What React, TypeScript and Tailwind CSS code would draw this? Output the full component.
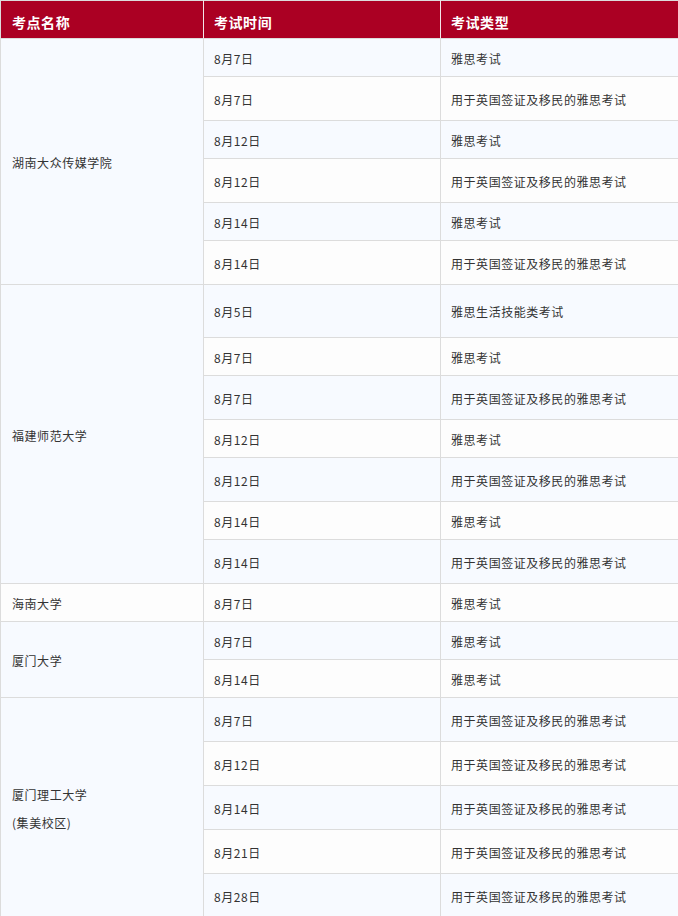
import React from "react";

type Row = { date: string; type: string; h: number; site?: { name: React.ReactNode; span: number } };

const L = "用于英国签证及移民的雅思考试";
const S = "雅思考试";

const rows: Row[] = [
  { date: "8月7日", type: S, h: 38, site: { name: "湖南大众传媒学院", span: 6 } },
  { date: "8月7日", type: L, h: 44 },
  { date: "8月12日", type: S, h: 38 },
  { date: "8月12日", type: L, h: 44 },
  { date: "8月14日", type: S, h: 38 },
  { date: "8月14日", type: L, h: 44 },
  { date: "8月5日", type: "雅思生活技能类考试", h: 53, site: { name: "福建师范大学", span: 7 } },
  { date: "8月7日", type: S, h: 38 },
  { date: "8月7日", type: L, h: 44 },
  { date: "8月12日", type: S, h: 38 },
  { date: "8月12日", type: L, h: 44 },
  { date: "8月14日", type: S, h: 38 },
  { date: "8月14日", type: L, h: 44 },
  { date: "8月7日", type: S, h: 38, site: { name: "海南大学", span: 1 } },
  { date: "8月7日", type: S, h: 38, site: { name: "厦门大学", span: 2 } },
  { date: "8月14日", type: S, h: 38 },
  {
    date: "8月7日",
    type: L,
    h: 44,
    site: {
      name: (
        <div className="leading-[28px]">
          <div>厦门理工大学</div>
          <div>(集美校区)</div>
        </div>
      ),
      span: 5,
    },
  },
  { date: "8月12日", type: L, h: 44 },
  { date: "8月14日", type: L, h: 44 },
  { date: "8月21日", type: L, h: 44 },
  { date: "8月28日", type: L, h: 44 },
];

export default function App() {
  return (
    <div
      className="w-[678px] bg-white overflow-hidden"
      style={{ fontFamily: '"Noto Sans CJK SC", "Noto Sans", sans-serif' }}
    >
      <table className="table-fixed border-collapse w-[678px] text-[12px] tracking-[0.544px] text-[#333333]">
        <colgroup>
          <col className="w-[203px]" />
          <col className="w-[237px]" />
          <col className="w-[238px]" />
        </colgroup>
        <thead>
          <tr className="bg-[#ab0023] text-white text-[14px] font-bold">
            <th className="h-[38px] border border-[#dcdcdc] border-r-[#f2e6e8] text-left align-middle pl-[11px] pt-[5px] pb-0">
              考点名称
            </th>
            <th className="h-[38px] border border-[#dcdcdc] border-r-[#f2e6e8] text-left align-middle pl-[10px] pt-[5px] pb-0">
              考试时间
            </th>
            <th className="h-[38px] border border-[#dcdcdc] text-left align-middle pl-[10px] pt-[5px] pb-0">
              考试类型
            </th>
          </tr>
        </thead>
        <tbody>
          {rows.map((r, i) => (
            <tr key={i} className={i % 2 === 0 ? "bg-[#f7faff]" : "bg-[#fdfdfd]"}>
              {r.site && (
                <td
                  rowSpan={r.site.span}
                  className="border border-[#dcdcdc] align-middle pl-[11px] pr-[10px] pt-[3px] pb-0 whitespace-nowrap"
                >
                  {r.site.name}
                </td>
              )}
              <td
                style={{ height: r.h }}
                className="border border-[#dcdcdc] align-middle pl-[10px] pt-[2px] pb-0 whitespace-nowrap"
              >
                {r.date}
              </td>
              <td className="border border-[#dcdcdc] align-middle pl-[10px] pt-[2px] pb-0 whitespace-nowrap">
                {r.type}
              </td>
            </tr>
          ))}
        </tbody>
      </table>
    </div>
  );
}
